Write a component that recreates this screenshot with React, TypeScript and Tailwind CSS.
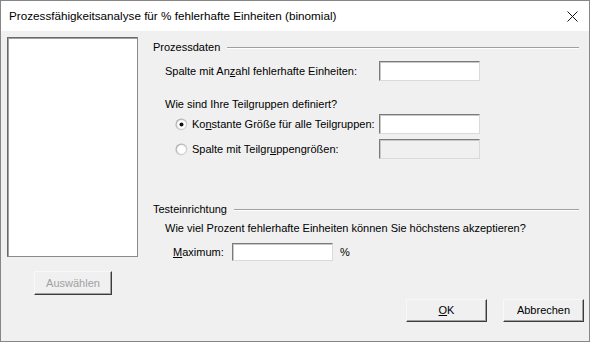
import React from 'react';

const font = { fontFamily: '"Liberation Sans", Arial, sans-serif' };

function Field({ width = 'w-[101px]', height = 'h-[20px]', disabled = false }: { width?: string; height?: string; disabled?: boolean }) {
  return (
    <div
      className={`${width} ${height} shrink-0 border border-t-[#7a7a7a] border-l-[#7a7a7a] border-r-[#dadada] border-b-[#dadada] shadow-[inset_1px_1px_0_#c8c8c8] ${
        disabled ? 'bg-[#f0f0f0]' : 'bg-white'
      }`}
    />
  );
}

function Radio({ checked }: { checked?: boolean }) {
  return (
    <svg width="13" height="13" viewBox="0 0 13 13" className="shrink-0">
      <defs>
        <linearGradient id={checked ? 'rg1' : 'rg2'} x1="0" y1="0" x2="1" y2="1">
          <stop offset="0" stopColor="#9a9a9a" />
          <stop offset="1" stopColor="#f4f4f4" />
        </linearGradient>
      </defs>
      <circle cx="6.5" cy="6.5" r="6" fill={`url(#${checked ? 'rg1' : 'rg2'})`} />
      <circle cx="6.5" cy="6.5" r="4.8" fill="#ffffff" stroke="#bdbdbd" strokeWidth="0.6" />
      {checked && <circle cx="6.5" cy="6.5" r="2" fill="#111111" />}
    </svg>
  );
}

function Button({ children, disabled = false, width = 'w-[81px]', height = 'h-[23px]' }: { children: React.ReactNode; disabled?: boolean; width?: string; height?: string }) {
  return (
    <div
      className={`${width} ${height} flex items-center justify-center border border-t-[#f8f8f8] border-l-[#f8f8f8] border-r-[#3c3c3c] border-b-[#3c3c3c] shadow-[inset_-1px_-1px_0_#a0a0a0] bg-[#f0f0f0] text-[11px] whitespace-nowrap ${
        disabled ? 'text-[#a0a0a0]' : 'text-black'
      }`}
    >
      {children}
    </div>
  );
}

function GroupTitle({ children }: { children: React.ReactNode }) {
  return (
    <div className="flex items-center h-[14px] text-[11px] leading-[14px] whitespace-nowrap">
      <span>{children}</span>
      <div className="flex-1 ml-[7px] mr-[10px] h-px bg-[#a0a0a0] shadow-[0_1px_0_#ffffff]" />
    </div>
  );
}

export default function App() {
  return (
    <div style={font} className="w-[590px] h-[342px] border border-[#868686] bg-[#f0f0f0] flex flex-col text-black overflow-hidden">
      {/* title bar */}
      <div className="h-[30px] shrink-0 bg-white flex items-center justify-between pl-[8px] pr-[11px]">
        <span className="text-[11.7px] whitespace-nowrap">Prozessfähigkeitsanalyse für % fehlerhafte Einheiten (binomial)</span>
        <svg width="11" height="11" viewBox="0 0 11 11">
          <path d="M0.5 0.5L10.5 10.5M10.5 0.5L0.5 10.5" stroke="#111" strokeWidth="1" />
        </svg>
      </div>

      <div className="flex flex-1">
        {/* variable list */}
        <div className="flex flex-col pl-[6px] pt-[6px]">
          <div className="w-[131px] h-[220px] bg-white border border-t-[#6a6a6a] border-l-[#6a6a6a] border-r-[#8a8a8a] border-b-[#8a8a8a] shadow-[inset_1px_1px_0_#a0a0a0]" />
          <div className="ml-[27px] mt-[14px]">
            <Button disabled width="w-[78px]" height="h-[24px]">
              Auswählen
            </Button>
          </div>
        </div>

        {/* options */}
        <div className="flex-1 flex flex-col ml-[15px] text-[11px] whitespace-nowrap">
          <div className="mt-[9px]">
            <GroupTitle>Prozessdaten</GroupTitle>
          </div>

          <div className="mt-[7px] flex items-center h-[20px] pl-[12px]">
            <span className="w-[214px]">
              Spalte mit An<span className="underline">z</span>ahl fehlerhafte Einheiten:
            </span>
            <Field />
          </div>

          <div className="mt-[16px] h-[14px] leading-[14px] pl-[12px]">Wie sind Ihre Teilgruppen definiert?</div>

          <div className="mt-[3px] flex items-center h-[20px] pl-[22px]">
            <Radio checked />
            <span className="ml-[4px] w-[187px]">
              Ko<span className="underline">n</span>stante Größe für alle Teilgruppen:
            </span>
            <Field />
          </div>

          <div className="mt-[5px] flex items-center h-[20px] pl-[22px]">
            <Radio />
            <span className="ml-[4px] w-[187px]">
              Spalte mit Teilgr<span className="underline">u</span>ppengrößen:
            </span>
            <Field disabled />
          </div>

          <div className="mt-[43px]">
            <GroupTitle>Testeinrichtung</GroupTitle>
          </div>

          <div className="mt-[5px] h-[14px] leading-[14px] pl-[12px]">
            Wie viel Prozent fehlerhafte Einheiten können Sie höchstens akzeptieren?
          </div>

          <div className="mt-[8px] flex items-center h-[18px] pl-[20px]">
            <span className="w-[59px]">
              <span className="underline">M</span>aximum:
            </span>
            <Field width="w-[101px]" height="h-[18px]" />
            <span className="ml-[7px]">%</span>
          </div>

          <div className="mt-[38px] flex justify-end gap-[16px] pr-[5px]">
            <Button>
              <span className="underline">O</span>K
            </Button>
            <Button>Abbrechen</Button>
          </div>
        </div>
      </div>
    </div>
  );
}
